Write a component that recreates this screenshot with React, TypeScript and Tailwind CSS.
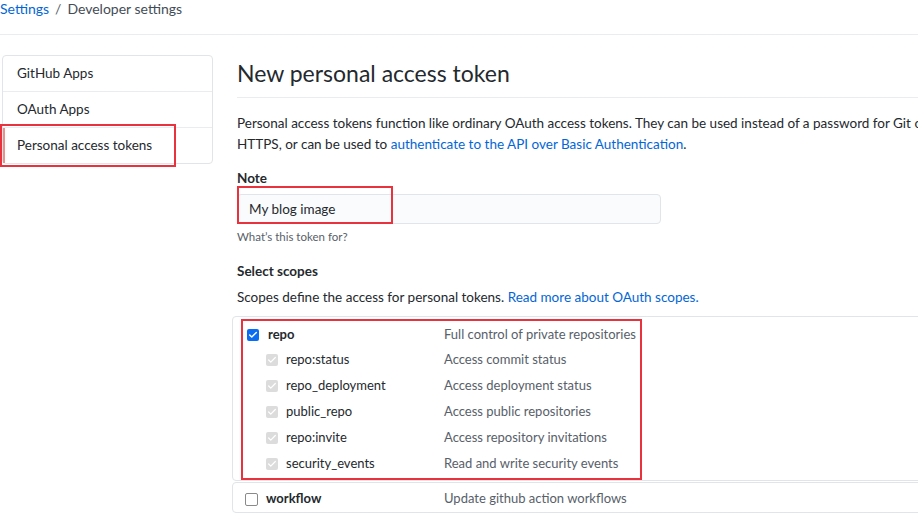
import { Check } from "lucide-react";

const font = { fontFamily: '"Lato", "Liberation Sans", sans-serif' };

const subScopes = [
  { name: "repo:status", desc: "Access commit status" },
  { name: "repo_deployment", desc: "Access deployment status" },
  { name: "public_repo", desc: "Access public repositories" },
  { name: "repo:invite", desc: "Access repository invitations" },
  { name: "security_events", desc: "Read and write security events" },
];

function Box({ checked, disabled }: { checked?: boolean; disabled?: boolean }) {
  if (disabled) {
    return (
      <span className="flex h-[12px] w-[12px] items-center justify-center rounded-[2px] bg-[#dcdcdc]">
        <Check className="h-[10px] w-[10px] text-white" strokeWidth={3} />
      </span>
    );
  }
  if (checked) {
    return (
      <span className="flex h-[12px] w-[12px] items-center justify-center rounded-[2px] bg-[#0a6cf0]">
        <Check className="h-[10px] w-[10px] text-white" strokeWidth={3.5} />
      </span>
    );
  }
  return <span className="block h-[13px] w-[13px] rounded-[2px] border border-[#8a8a8a] bg-white" />;
}

export default function App() {
  return (
    <div className="h-[516px] w-[918px] overflow-hidden whitespace-nowrap bg-white text-[#24292e]" style={font}>
      {/* Breadcrumb */}
      <div className="flex h-[35px] items-start border-b border-[#eaecef] text-[14px] leading-[18px]">
        <span className="text-[#0366d6]">Settings</span>
        <span className="mx-[6px] text-[#586069]">/</span>
        <span className="text-[#444d56]">Developer settings</span>
      </div>

      <div className="flex pt-[20px]">
        {/* Sidebar */}
        <div className="ml-[2px] w-[211px] shrink-0">
          <div className="rounded-[4px] border border-[#e1e4e8] text-[13.5px] text-[#24292e]">
            <div className="flex h-[36px] items-center border-b border-[#eaecef] pl-[14px]">GitHub Apps</div>
            <div className="flex h-[36px] items-center border-b border-[#eaecef] pl-[14px]">OAuth Apps</div>
            <div className="relative flex h-[35px] items-center border-l-2 border-[#ef8f8a] pl-[12px]">
              Personal access tokens
              <div className="absolute left-[-5px] top-[-4px] h-[43px] w-[176px] border-2 border-[#e8333f]" />
            </div>
          </div>
        </div>

        {/* Main */}
        <div className="ml-[24px] min-w-0 flex-1">
          <h1 className="border-b border-[#eaecef] pb-[6px] text-[23px] leading-[36px] font-normal text-[#24292e]">
            New personal access token
          </h1>
          <p className="mt-[15px] text-[13.5px] leading-[21px] text-[#24292e]">
            Personal access tokens function like ordinary OAuth access tokens. They can be used instead of a password for Git over
            <br />
            HTTPS, or can be used to <span className="text-[#0366d6]">authenticate to the API over Basic Authentication</span>.
          </p>

          <div className="mt-[13px] text-[13.5px] font-bold leading-[20px]">Note</div>
          <div className="relative mt-[6px] w-[424px]">
            <div className="flex h-[30px] items-center rounded-[4px] border border-[#e1e4e8] bg-[#fafbfc] pl-[11px] text-[13.5px]">
              My blog image
            </div>
            <div className="absolute left-0 top-[-8px] h-[38px] w-[156px] border-2 border-[#e8333f]" />
          </div>
          <div className="mt-[5px] text-[11.5px] leading-[16px] text-[#586069]">What’s this token for?</div>

          <div className="mt-[16px] text-[13.5px] font-bold leading-[20px]">Select scopes</div>
          <p className="mt-[6px] text-[13.5px] leading-[20px]">
            Scopes define the access for personal tokens.{" "}
            <span className="text-[#0366d6]">Read more about OAuth scopes.</span>
          </p>

          {/* Scopes */}
          <div className="ml-[-5px] mt-[9px] w-[800px]">
            <div className="rounded-[4px] border border-[#e1e4e8] pt-[2px]">
              <div className="ml-[8px] w-[401px] border-2 border-[#e8333f] pb-[1px] text-[13px]">
                <div className="flex h-[26px] items-center pl-[4px] pt-[2px]">
                  <div className="flex w-[197px] items-center gap-[9px]">
                    <Box checked />
                    <span className="font-bold">repo</span>
                  </div>
                  <span className="text-[#586069]">Full control of private repositories</span>
                </div>
                {subScopes.map((s) => (
                  <div key={s.name} className="flex h-[26px] items-center pl-[23px]">
                    <div className="flex w-[178px] items-center gap-[8px]">
                      <Box disabled />
                      <span>{s.name}</span>
                    </div>
                    <span className="text-[#586069]">{s.desc}</span>
                  </div>
                ))}
              </div>
            </div>
            <div className="mt-[1px] rounded-[4px] border border-[#e1e4e8] pt-[3px] text-[13px]">
              <div className="flex h-[26px] items-center pl-[12px]">
                <div className="flex w-[199px] items-center gap-[8px]">
                  <Box />
                  <span className="font-bold">workflow</span>
                </div>
                <span className="text-[#586069]">Update github action workflows</span>
              </div>
            </div>
          </div>
        </div>
      </div>
    </div>
  );
}
